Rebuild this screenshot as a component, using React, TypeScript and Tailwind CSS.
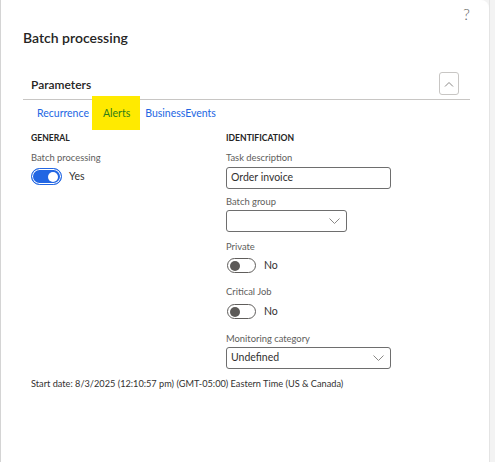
const font = "font-['Lato',sans-serif]";

export default function App() {
  return (
    <div className={`flex h-[462px] w-[495px] bg-[#f3f3f3] ${font} text-[#323130]`}>
      <div className="flex w-[489px] flex-col rounded-tr-lg border-l border-[#d4d4d4] bg-white pl-[22px] pr-[19px]">
        <div className="flex h-[28px] items-center justify-end">
          <span className="text-[16px] font-light leading-none text-[#666]">?</span>
        </div>
        <h1 className="text-[14px] font-semibold leading-[20px] text-[#252423]">Batch processing</h1>

        <section className="mt-[22px]">
          <div className="flex h-[30px] items-center justify-between border-b border-[#c8c6c4] pl-2 pr-[11px]">
            <h2 className="text-[12px] font-semibold text-[#252423]">Parameters</h2>
            <button className="-mt-[2px] flex h-[23px] w-[20px] items-center justify-center rounded-[3px] border border-[#c8c6c4] bg-white">
              <svg width="10" height="6" viewBox="0 0 10 6" fill="none" stroke="#8a8886" strokeWidth="1">
                <path d="M1 5.5 5 1.5 9 5.5" />
              </svg>
            </button>
          </div>

          <nav className="flex h-[26px] items-center pl-2 text-[10.5px] leading-[16px] text-[#2266e3]">
            <span className="px-[6px]">Recurrence</span>
            <span className="relative px-[8px]">
              <span className="absolute -inset-y-[9px] -left-[3px] -right-[2px] bg-[#ffea00]" />
              <span className="relative text-[#2f7d1a]">Alerts</span>
            </span>
            <span className="px-[7px]">BusinessEvents</span>
          </nav>

          <div className="mt-[5px] grid grid-cols-[195px_1fr] pl-2">
            <div className="flex flex-col">
              <GroupTitle>General</GroupTitle>
              <Label className="mt-[6px]">Batch processing</Label>
              <div className="mt-[3px]">
                <Toggle on />
              </div>
            </div>

            <div className="flex flex-col">
              <GroupTitle>Identification</GroupTitle>
              <Label className="mt-[6px]">Task description</Label>
              <div className="mt-[2px] flex h-[22px] w-[165px] items-center rounded-[3px] border border-[#6e6e6e] px-[4px] text-[10.5px]">
                Order invoice
              </div>

              <Label className="mt-[6px]">Batch group</Label>
              <Select className="mt-[1px] w-[121px]" />

              <Label className="mt-[8px]">Private</Label>
              <div className="mt-[4px] pl-px">
                <Toggle />
              </div>

              <Label className="mt-[12px]">Critical Job</Label>
              <div className="mt-[5px] pl-px">
                <Toggle />
              </div>

              <Label className="mt-[13px]">Monitoring category</Label>
              <Select className="mt-[1px] w-[165px]" value="Undefined" />
            </div>
          </div>

          <p className="mt-[8px] pl-2 text-[9.2px] leading-[14px] text-[#323130]">
            Start date: 8/3/2025 (12:10:57 pm) (GMT-05:00) Eastern Time (US &amp; Canada)
          </p>
        </section>
      </div>
      <div className="flex-1 border-l border-[#e4e4e4] bg-[#f3f3f3]" />
    </div>
  );
}

function GroupTitle({ children }: { children: React.ReactNode }) {
  return <h3 className="text-[8.6px] font-bold uppercase leading-[14px] text-[#252423]">{children}</h3>;
}

function Label({ children, className = "" }: { children: React.ReactNode; className?: string }) {
  return <label className={`block h-[14px] text-[9.4px] leading-[14px] text-[#605e5c] ${className}`}>{children}</label>;
}

function Toggle({ on = false }: { on?: boolean }) {
  return (
    <div className={`flex items-center ${on ? "h-[17px]" : "h-[15px]"}`}>
      {on ? (
        <span className="flex h-[17px] w-[31px] items-center justify-end rounded-full border border-[#2266e3] bg-[#2266e3] pr-[3px] shadow-[inset_0_0_0_1px_#ffffff]">
          <span className="h-[10px] w-[10px] rounded-full bg-white" />
        </span>
      ) : (
        <span className="flex h-[15px] w-[29px] items-center rounded-full border border-[#605e5c] bg-white pl-[2px]">
          <span className="h-[10px] w-[10px] rounded-full bg-[#5c5a58]" />
        </span>
      )}
      <span className={`${on ? "ml-[7px]" : "ml-[8px]"} text-[10.5px] leading-[15px] text-[#323130]`}>{on ? "Yes" : "No"}</span>
    </div>
  );
}

function Select({ className = "", value = "" }: { className?: string; value?: string }) {
  return (
    <div className={`flex h-[22px] items-center justify-between rounded-[3px] border border-[#6e6e6e] pl-[4px] pr-[6px] text-[10.5px] ${className}`}>
      <span>{value}</span>
      <svg width="11" height="6" viewBox="0 0 11 6" fill="none" stroke="#8a8886" strokeWidth="1">
        <path d="M0.5 0.5 5.5 5.5 10.5 0.5" />
      </svg>
    </div>
  );
}
